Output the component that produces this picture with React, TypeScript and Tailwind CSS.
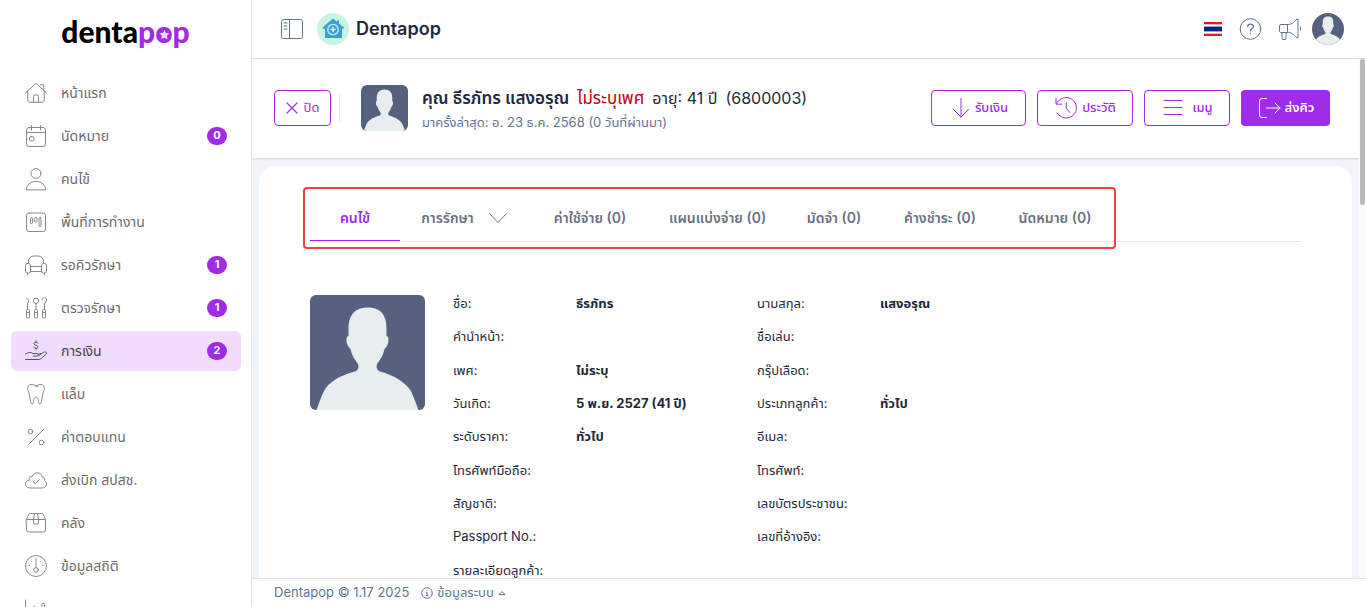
import React from 'react';
import clsx from 'clsx';

interface NavItem {
  label: string;
  icon: React.ReactNode;
  badge?: number;
  active?: boolean;
  iconOnly?: boolean;
}

interface Field {
  label: string;
  value?: string;
}

const Icon: React.FC<{ children: React.ReactNode }> = ({ children }) => (
  <svg
    viewBox="0 0 24 24"
    fill="none"
    stroke="currentColor"
    strokeWidth="1"
    strokeLinecap="round"
    strokeLinejoin="round"
    aria-hidden="true"
    className="size-6 shrink-0"
  >
    {children}
  </svg>
);

const navItems: NavItem[] = [
  {
    label: 'หน้าแรก',
    icon: (
      <>
        <path d="M1.5 12 12 2.3 22.5 12M16.5 3.8h3.3v5.5M3.8 10v9.3a2 2 0 0 0 2 2h12.4a2 2 0 0 0 2-2V10M9.5 21v-5.500a1.500 1.500 0 0 1 1.500-1.500h2a1.500 1.500 0 0 1 1.500 1.500V21" />
      </>
    ),
  },
  {
    label: 'นัดหมาย',
    badge: 0,
    icon: (
      <>
        <rect x="2.5" y="3.5" width="19" height="19" rx="2.5" />
        <path d="M2.5 8.5h19M7.5 1.5v4.5M16.5 1.5v4.5" />
        <rect x="5.5" y="12.5" width="4.5" height="4.5" rx="1.5" />
      </>
    ),
  },
  {
    label: 'คนไข้',
    icon: (
      <>
        <circle cx="12" cy="6.5" r="5" />
        <path d="M2.5 22.5c0-4.5 3.5-8 9.5-8s9.5 3.5 9.5 8z" />
      </>
    ),
  },
  {
    label: 'พื้นที่การทำงาน',
    icon: (
      <>
        <rect x="2.5" y="3" width="19" height="18.5" rx="2.5" />
        <rect x="6.5" y="7.5" width="2" height="6" rx="1" />
        <rect x="10.5" y="7.5" width="2.5" height="4.5" rx="1" />
        <rect x="15" y="7.5" width="2" height="9" rx="1" />
      </>
    ),
  },
  {
    label: 'รอคิวรักษา',
    badge: 1,
    icon: (
      <>
        <path d="M4.5 10.5V8A5.5 5.5 0 0 1 10 3h4a5.5 5.5 0 0 1 5.5 5v2.500M6.500 13.500h11M6.500 18.500h11" />
        <rect x="1.5" y="10.5" width="5" height="9.5" rx="2" />
        <rect x="17.5" y="10.5" width="5" height="9.5" rx="2" />
        <path d="M3.5 20v1.5M20.5 20v1.5" />
      </>
    ),
  },
  {
    label: 'ตรวจรักษา',
    badge: 1,
    icon: (
      <>
        <path d="M2.5 2.500 5 4.500 3.500 8v5.500M12 7.500v6M18 4a2.300 2.300 0 1 1 3.500 2l-1 2v5.500" />
        <circle cx="12" cy="4.7" r="2.7" />
        <rect x="2.5" y="13.5" width="3" height="8.5" rx="1" />
        <rect x="10.5" y="13.5" width="3" height="8.5" rx="1" />
        <rect x="18.5" y="13.5" width="3" height="8.5" rx="1" />
        <path d="M2.5 16.5h3M10.5 16.5h3M18.5 16.5h3" />
      </>
    ),
  },
  {
    label: 'การเงิน',
    badge: 2,
    active: true,
    icon: (
      <>
        <path d="M14 4.2c-.3-.8-1-1-2-1-1.2 0-2 .6-2 1.5 0 2 4 1.2 4 3.2 0 .9-.8 1.4-2 1.4-1.1 0-1.9-.4-2.1-1.2M12 1.9v1.3M12 9.3v1.2" />
        <path d="M1.5 15c3-2 5.5-2 7.5-.5h4c1.8 0 2.2 2.5.3 2.5H9.500M15 16.500l4.500-3.200c2-1.200 3.800.4 2.500 2l-4.500 4c-1 .9-2 1.200-3.500 1.200H1.500" />
        <path d="m14 15.5 2.5-1" />
      </>
    ),
  },
  {
    label: 'แล็บ',
    icon: (
      <path d="M12 3.8c-2-1-3.5-1.3-5-1.3-2.6 0-3.8 2.2-3.3 5 .4 2.400 1.800 4 2.100 6.500.4 3 .5 5.500 1.400 7.300.5 1 1.600.8 1.900-.2.6-2 .5-6 2.900-6s2.300 4 2.900 6c.3 1 1.400 1.200 1.900.2.9-1.800 1-4.300 1.400-7.300.3-2.500 1.700-4.100 2.100-6.500.5-2.800-.7-5-3.300-5-1.500 0-3 .3-5 1.300zM12 3.800l2 1" />
    ),
  },
  {
    label: 'ค่าตอบแทน',
    icon: (
      <>
        <circle cx="6.5" cy="6.5" r="2.3" />
        <circle cx="17.5" cy="17.5" r="2.3" />
        <path d="m19.5 4.5-15 15" />
      </>
    ),
  },
  {
    label: 'ส่งเบิก สปสช.',
    icon: (
      <>
        <path d="M6 20c-6 0-6-7.500-.8-7.700-.6-3 1.500-4.200 3-3.600C10 3 18 4 18 9c2.500 0 3 2 2.500 3.500C24 14.500 23 20 18.500 20z" />
        <path d="m9 13.5 2.3 2.2 4-4" />
      </>
    ),
  },
  {
    label: 'คลัง',
    icon: (
      <path d="M2.5 8.5 4.500 4a2 2 0 0 1 2-1.500h11a2 2 0 0 1 2 1.500l2 4.500M2.500 8.500h19V19a2 2 0 0 1-2 2h-15a2 2 0 0 1-2-2zM9.500 8.500l1-6M14.500 8.500l-1-6M9.500 8.500V12a1 1 0 0 0 1 1h3a1 1 0 0 0 1-1V8.500" />
    ),
  },
  {
    label: 'ข้อมูลสถิติ',
    icon: (
      <>
        <circle cx="12" cy="12" r="10.5" />
        <circle cx="12" cy="16" r="2.3" />
        <path d="M12 13.7V4.5M5 11.5h.5M18.5 11.5h.5M7 7l.4.4M17 7l-.4.4" />
      </>
    ),
  },
  {
    label: 'รายงาน',
    iconOnly: true,
    icon: (
      <>
        <path d="M1.5 3v19.5h21M9.500 10h2.500v9h-2.500z" />
        <rect x="18" y="6.5" width="2.5" height="12.500" rx="1" />
      </>
    ),
  },
];

const tabs = [
  { label: 'คนไข้', width: 'w-[90px]' },
  { label: 'การรักษา', width: 'w-[129px]', menu: true },
  { label: 'ค่าใช้จ่าย (0)', width: 'w-[122px]' },
  { label: 'แผนแบ่งจ่าย (0)', width: 'w-[133px]' },
  { label: 'มัดจำ (0)', width: 'w-[100px]' },
  { label: 'ค้างชำระ (0)', width: 'w-[112px]' },
  { label: 'นัดหมาย (0)', width: 'w-[118px]' },
];

const leftFields: Field[] = [
  { label: 'ชื่อ', value: 'ธีรภัทร' },
  { label: 'คำนำหน้า' },
  { label: 'เพศ', value: 'ไม่ระบุ' },
  { label: 'วันเกิด', value: '5 พ.ย. 2527 (41 ปี)' },
  { label: 'ระดับราคา', value: 'ทั่วไป' },
  { label: 'โทรศัพท์มือถือ' },
  { label: 'สัญชาติ' },
  { label: 'Passport No.' },
  { label: 'รายละเอียดลูกค้า' },
];

const rightFields: Field[] = [
  { label: 'นามสกุล', value: 'แสงอรุณ' },
  { label: 'ชื่อเล่น' },
  { label: 'กรุ๊ปเลือด' },
  { label: 'ประเภทลูกค้า', value: 'ทั่วไป' },
  { label: 'อีเมล' },
  { label: 'โทรศัพท์' },
  { label: 'เลขบัตรประชาชน' },
  { label: 'เลขที่อ้างอิง' },
];

const Avatar: React.FC<{ className?: string }> = ({ className }) => (
  <svg viewBox="0 0 115 115" preserveAspectRatio="xMidYMid slice" className={clsx('shrink-0', className)} role="img" aria-label="avatar">
    <rect width="115" height="115" fill="#56607f" />
    <path
      fill="#e8edee"
      d="M58 12.5C43 12.5 38 22 38.5 36v5c-3 0-3 9 2 13 1 6 4 10 7.5 15 1 4 0 6-3 7.5C30 80 18 88 14 96c-3 6-5 12-7.5 19h102c-2.500-7-5-13-7.500-19-5-8-17-16-31-19.500-3-1.500-4-3.500-3-7.500 3.500-5 6.500-9 7.500-15 5-4 5-13 2-13v-5c.5-14-4-23.500-18.500-23.500z"
    />
  </svg>
);

const Logo = () => (
  <a href="#" className="flex h-[73px] shrink-0 items-center justify-center pb-3 font-['Lato',sans-serif] text-3xl leading-8 font-black text-black">
    denta
    <span className="flex text-[#9f2ce8]">
      p
      <span className="relative">
        o
        <svg viewBox="0 0 14 14" className="absolute inset-x-0 top-3 mx-auto size-4" aria-hidden="true">
          <circle cx="7" cy="7" r="6" fill="#9f2ce8" />
          <path fill="#f0dcfd" d="m7.5 2.5 1.200 2.700 3 .4-2.200 2.100.6 3.100-2.700-1.400-2.800 1.200.5-3-2.100-2.200 3.100-.3z" />
        </svg>
      </span>
      p
    </span>
  </a>
);

const Sidebar = () => (
  <aside className="flex w-[252px] shrink-0 flex-col overflow-hidden border-r border-slate-200 bg-white">
    <Logo />
    <nav className="flex flex-col gap-[3px] pr-2.5 pl-[11px]">
      {navItems.map((item) => (
        <a
          key={item.label}
          href="#"
          aria-label={item.label}
          className={clsx(
            'flex h-10 shrink-0 items-center rounded-md pr-3.5 pl-[13px] text-sm',
            item.active ? 'bg-[#f0dcfd] text-[#444]' : 'text-[#6b6b6b]'
          )}
        >
          <span className={item.active ? 'text-[#555]' : 'text-[#888]'}>
            <Icon>{item.icon}</Icon>
          </span>
          {!item.iconOnly && <span className="ml-[13px] flex-1">{item.label}</span>}
          {item.badge !== undefined && (
            <span className="flex h-[18px] min-w-5 items-center justify-center rounded-full bg-[#9f2ce8] px-1.5 text-[11px] font-bold text-white">
              {item.badge}
            </span>
          )}
        </a>
      ))}
    </nav>
  </aside>
);

const Header = () => (
  <header className="z-10 flex h-[58px] shrink-0 items-center bg-white pr-[22px] pl-7 shadow-[0_1px_1px_rgba(0,0,0,0.12)]">
    <button type="button" aria-label="เมนูข้าง" className="text-slate-500">
      <Icon>
        <rect x="1.5" y="2.5" width="21" height="19" rx="2" />
        <path d="M9.5 2.5v19M4 6h3M4 9h3M4 12h3" />
      </Icon>
    </button>
    <svg viewBox="0 0 32 32" className="ml-[13px] size-8" aria-hidden="true">
      <circle cx="16" cy="16" r="16" fill="#c6f6e0" />
      <path fill="#3f9be0" d="M16 5.5 5.500 14.500l1.500 1.700 1-.8V25h17v-9.600l1 .8 1.200-1.500L22 10.500V7.500h-2v1.300z" />
      <circle cx="16" cy="16.5" r="5.2" fill="none" stroke="#c6f6e0" strokeWidth="1.3" />
      <path d="M16 13.800v5.400M13.300 16.500h5.400" stroke="#c6f6e0" strokeWidth="1.6" />
    </svg>
    <h1 className="ml-[7px] flex-1 text-lg font-semibold text-slate-800">Dentapop</h1>
    <div className="flex items-center">
      <button type="button" aria-label="ภาษาไทย">
        <svg viewBox="0 0 18 14" className="h-3.5 w-[18px]">
          <path fill="#e31d1c" d="M0 0h18v14H0z" />
          <path fill="#fff" d="M0 2.3h18v9.400H0z" />
          <path fill="#00267f" d="M0 4.6h18v4.800H0z" />
        </svg>
      </button>
      <button type="button" aria-label="ช่วยเหลือ" className="ml-4 text-slate-500">
        <Icon>
          <circle cx="12.5" cy="12" r="10.3" />
          <path d="M9.7 9.700c0-3.600 5.700-3.400 5.700-.2 0 2-2.900 2-2.900 4.500M12.500 16.300v.4" strokeWidth="1.3" />
        </Icon>
      </button>
      <button type="button" aria-label="ประกาศ" className="ml-4 text-slate-500">
        <Icon>
          <path d="M2.5 7.500h7v8h-7a1.500 1.500 0 0 1-1-1.500V9a1.500 1.500 0 0 1 1-1.500zM9.500 7.500c4 0 6-1.500 9.500-5.500h1v19h-1c-3.500-4-5.500-5.500-9.500-5.500M4 15.500v6a1 1 0 0 0 1 1h2a1 1 0 0 0 1-1v-6M22.500 10v3" />
        </Icon>
      </button>
      <button type="button" aria-label="บัญชีผู้ใช้" className="ml-2.5">
        <Avatar className="size-8 rounded-full" />
      </button>
    </div>
  </header>
);

const outlineButton = 'flex h-9 items-center justify-center rounded border border-[#9f2ce8] text-[13px] text-[#9f2ce8]';

const PatientBar = () => (
  <section className="flex h-[100px] shrink-0 items-center bg-white pr-[29px] pl-[22px] shadow-[0_1px_2px_rgba(0,0,0,0.15)]">
    <button type="button" className={clsx(outlineButton, 'w-[57px] gap-1.5')}>
      <svg viewBox="0 0 12 12" className="size-3" stroke="currentColor" strokeWidth="1.2" strokeLinecap="round" aria-hidden="true">
        <path d="m1 1 10 10M11 1 1 11" />
      </svg>
      ปิด
    </button>
    <div className="ml-2 h-7 w-px bg-slate-200" />
    <Avatar className="ml-[21px] h-[46px] w-[47px] rounded-md" />
    <div className="ml-3.5 flex-1 pt-1">
      <p className="flex gap-2 text-[17px] leading-6 text-slate-800">
        <strong className="font-semibold">คุณ ธีรภัทร แสงอรุณ</strong>
        <span className="text-red-700">ไม่ระบุเพศ</span>
        <span className="text-base leading-6">อายุ: 41 ปี</span>
        <span className="text-base leading-6">(6800003)</span>
      </p>
      <p className="text-[13px] leading-6 text-slate-500">มาครั้งล่าสุด: อ. 23 ธ.ค. 2568 (0 วันที่ผ่านมา)</p>
    </div>
    <div className="flex gap-[11px] font-medium">
      <button type="button" className={clsx(outlineButton, 'w-[95px] gap-0.5')}>
        <Icon>
          <path d="M12 2.5V21M4.500 13.500 12 21l7.500-7.500" />
        </Icon>
        รับเงิน
      </button>
      <button type="button" className={clsx(outlineButton, 'w-24 gap-1')}>
        <Icon>
          <path d="M2 2.5v5.700h5.700M2.700 7.500a10.300 10.300 0 1 1 .5 9.500M12.300 7v5.500l3.700 4" />
        </Icon>
        ประวัติ
      </button>
      <button type="button" className={clsx(outlineButton, 'w-[86px] gap-[7px]')}>
        <Icon>
          <path d="M3 4.5h18M3 11.5h18M3 18.5h18" />
        </Icon>
        เมนู
      </button>
      <button type="button" className="flex h-9 w-[89px] items-center justify-center gap-1 rounded bg-[#9f2ce8] text-[13px] font-semibold text-white">
        <Icon>
          <path d="M9.5 21.500H5A2.500 2.500 0 0 1 2.500 19V5A2.500 2.500 0 0 1 5 2.500h4.500M9.500 12H23M18 7l5 5-5 5" />
        </Icon>
        ส่งคิว
      </button>
    </div>
  </section>
);

const FieldList: React.FC<{ fields: Field[] }> = ({ fields }) => (
  <dl className="grid h-75 w-76 grid-rows-9 text-[13px] text-slate-800">
    {fields.map((field) => (
      <div key={field.label} className="flex items-center">
        <dt className="w-[123px]">{field.label}:</dt>
        <dd className="font-bold">{field.value}</dd>
      </div>
    ))}
  </dl>
);

const PatientCard = () => (
  <section className="mx-[7px] mt-2 flex-1 overflow-hidden rounded-t-2xl bg-white pt-[22px]">
    <div className="relative mx-[51px] border-b border-slate-200">
      <div role="tablist" className="flex h-[53px]">
        {tabs.map((tab, i) => (
          <button
            key={tab.label}
            type="button"
            role="tab"
            aria-selected={i === 0}
            className={clsx(
              'flex shrink-0 items-center justify-center border-b pt-2 text-sm font-semibold whitespace-nowrap',
              tab.width,
              i === 0 ? 'border-[#9f2ce8] text-[#9f2ce8]' : 'border-transparent text-gray-500'
            )}
          >
            {tab.label}
            {tab.menu && (
              <svg viewBox="0 0 20 12" className="ml-3.5 h-3 w-5" fill="none" stroke="currentColor" aria-hidden="true">
                <path d="m1.5 1.5 8.5 9 8.500-9" />
              </svg>
            )}
          </button>
        ))}
      </div>
      {/* frame drawn round the tabs */}
      <div className="pointer-events-none absolute -top-px -left-[7px] h-[62px] w-[813px] rounded border-2 border-[#ef4040]" />
    </div>
    <div className="mt-[45px] flex pl-[51px]">
      <Avatar className="mt-2 size-[115px] rounded-md" />
      <div className="ml-7 flex">
        <FieldList fields={leftFields} />
        <FieldList fields={rightFields} />
      </div>
    </div>
  </section>
);

const Footer = () => (
  <footer className="flex h-[29px] shrink-0 items-center border-t border-slate-200 bg-white pl-[22px] text-[13px] text-slate-500">
    <span>Dentapop © 1.17 2025</span>
    <button type="button" className="ml-3 flex items-center gap-1">
      <svg viewBox="0 0 12 12" className="size-3" fill="none" stroke="currentColor" aria-hidden="true">
        <circle cx="6" cy="6" r="5.3" />
        <path d="M5 5.3h1v3.200M4.700 8.500h2.600M6 3v.8" />
      </svg>
      ข้อมูลระบบ
      <svg viewBox="0 0 8 6" className="h-1.5 w-2" fill="none" stroke="currentColor" aria-hidden="true">
        <path d="M1 4.5 4 1.500l3 3z" />
      </svg>
    </button>
  </footer>
);

export default function App() {
  return (
    <div className="flex h-screen overflow-hidden bg-white font-['Inter','Noto_Sans','Noto_Sans_Thai',sans-serif]">
      <Sidebar />
      <div className="flex min-w-0 flex-1 flex-col">
        <Header />
        <div className="flex min-h-0 flex-1">
          <main className="flex min-w-0 flex-1 flex-col overflow-hidden bg-slate-100">
            <PatientBar />
            <PatientCard />
          </main>
          <div className="w-[7px] bg-slate-50 pt-px">
            <div className="mx-px h-[146px] rounded-full bg-[#b5bac0]" />
          </div>
        </div>
        <Footer />
      </div>
    </div>
  );
}
